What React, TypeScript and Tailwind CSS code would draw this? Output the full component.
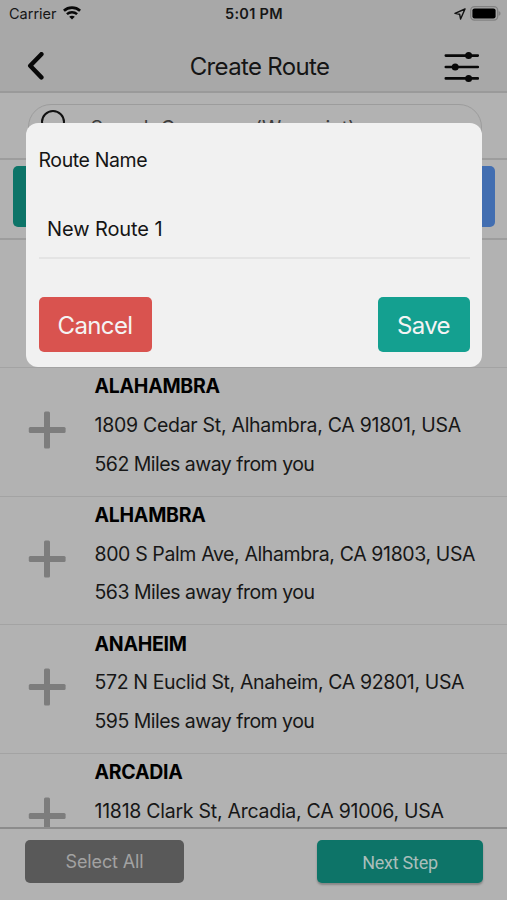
import React from "react";

type Stop = { name: string; address: string; addressTracking: string; distance?: string };

const stops: Stop[] = [
  { name: "ALAHAMBRA", address: "1809 Cedar St, Alhambra, CA 91801, USA", addressTracking: "tracking-[-0.28px]", distance: "562 Miles away from you" },
  { name: "ALHAMBRA", address: "800 S Palm Ave, Alhambra, CA 91803, USA", addressTracking: "tracking-[-0.38px]", distance: "563 Miles away from you" },
  { name: "ANAHEIM", address: "572 N Euclid St, Anaheim, CA 92801, USA", addressTracking: "tracking-[-0.37px]", distance: "595 Miles away from you" },
  { name: "ARCADIA", address: "11818 Clark St, Arcadia, CA 91006, USA", addressTracking: "tracking-[-0.26px]" },
];

function StatusBar() {
  return (
    <div className="flex h-7 items-center justify-between pl-[9px] pr-[6px] text-[#161616]">
      <div className="flex w-[120px] items-center gap-[6px]">
        <span className="text-[14.5px] leading-none">Carrier</span>
        <svg className="-mt-[2px]" width="18" height="14" viewBox="0 0 18 14" fill="none" stroke="#080808">
          <path d="M0.9 4.7C5.5 0.5 12.5 0.5 17.1 4.7" strokeWidth="2.7" />
          <path d="M3.9 8.2C6.8 5.5 11.2 5.5 14.1 8.2" strokeWidth="2.5" />
          <path d="M6.2 10.8C7.8 9.4 10.2 9.4 11.8 10.8L9 13.6Z" fill="#080808" stroke="none" />
        </svg>
      </div>
      <span className="-ml-[2px] text-[14.5px] font-semibold leading-none tracking-[0.3px]">5:01 PM</span>
      <div className="flex w-[120px] items-center justify-end gap-[4px]">
        <svg width="12" height="12" viewBox="0 0 12 12" fill="none" stroke="#111" strokeWidth="1.4" strokeLinejoin="round">
          <path d="M11 1L1 5.4L5.6 6.2L6.6 11Z" />
        </svg>
        <svg className="-mt-[1px]" width="31" height="15" viewBox="0 0 31 15">
          <rect x="0.7" y="0.7" width="27" height="13.4" rx="3.8" fill="none" stroke="#828282" strokeWidth="1.3" />
          <rect x="2.4" y="2.4" width="23.2" height="10" rx="2.2" fill="#000" />
          <path d="M28.6 5C31.2 5.8 31.2 9 28.6 9.8Z" fill="#828282" />
        </svg>
      </div>
    </div>
  );
}

function Header() {
  return (
    <header className="h-[93px] shrink-0 border-b-2 border-[#9a9a9a] bg-[#a8a8a8]">
      <StatusBar />
      <div className="flex h-[63px] items-center justify-between pl-[27px] pr-[27px] pt-[14px]">
        <svg className="-mt-[1px] mr-[18px]" width="18" height="28" viewBox="0 0 18 28" fill="none" stroke="#080808" strokeWidth="4.4" strokeLinecap="round" strokeLinejoin="round">
          <path d="M14.4 2.2L3.2 13.8L14.4 25.4" />
        </svg>
        <h1 className="ml-[12px] text-[24px] leading-none tracking-[-0.67px] text-[#151515]">Create Route</h1>
        <svg className="mt-[1px]" width="36" height="32" viewBox="0 0 36 32" fill="#080808" stroke="#080808" strokeWidth="2.6" strokeLinecap="round">
          <path d="M1.8 4.6H33.8M1.8 16H33.8M1.8 27.4H33.8" />
          <g stroke="none">
            <circle cx="24.6" cy="4.6" r="3.5" />
            <circle cx="11.2" cy="16" r="3.5" />
            <circle cx="24.6" cy="27.4" r="3.5" />
          </g>
        </svg>
      </div>
    </header>
  );
}

function SearchBar() {
  return (
    <div className="flex h-[67px] shrink-0 items-center border-b-2 border-[#9d9d9d] pl-[28px] pr-[25px]">
      <div className="mt-[3px] flex h-[46px] w-full items-center rounded-full border border-[#9c9c9c] pl-[11.5px]">
        <svg className="mt-[1px]" width="30" height="36" viewBox="0 0 30 36" fill="none" stroke="#111" strokeWidth="2">
          <circle cx="12" cy="12" r="11" />
          <path d="M20 20L28 29" />
        </svg>
        <span className="ml-[20px] mt-[4px] text-[19.5px] leading-none tracking-[0.02px] text-[#3c3c3c]">Search Company (Waypoint)</span>
      </div>
    </div>
  );
}

function StopRow({ stop }: { stop: Stop }) {
  return (
    <li className="flex h-[128.7px] shrink-0 border-t border-[#a3a3a3]">
      <div className="flex w-[94.5px] shrink-0 justify-center pt-[43px]">
        <svg className="-ml-[1px]" width="38" height="38" viewBox="0 0 38 38" fill="#7d7d7d">
          <rect x="0.8" y="16" width="36.8" height="6" rx="1.5" />
          <rect x="16" y="0.6" width="6" height="36.8" rx="1.5" />
        </svg>
      </div>
      <div className="-mt-[0.7px] whitespace-nowrap text-[19.5px] leading-[38.7px] text-[#171717]">
        <p><b className="font-bold tracking-[-0.27px] text-black">{stop.name}</b></p>
        <p><span className={stop.addressTracking}>{stop.address}</span></p>
        {stop.distance && <p><span className="tracking-[-0.52px]">{stop.distance}</span></p>}
      </div>
    </li>
  );
}

function RouteDialog() {
  return (
    <div role="dialog" className="absolute left-[26px] top-[123px] flex h-[244px] w-[456px] flex-col rounded-[12px] bg-[#f1f1f1] px-[12.5px] text-[#151515]">
      <label className="mt-[27px] text-[19.5px] leading-5 tracking-[-0.4px]">Route Name</label>
      <div className="mt-[40px] flex h-[49px] border-b-2 border-[#e4e4e4] pl-[8.5px] pt-[9px] text-[20px] leading-5 tracking-[-0.1px]">
        <span>New Route 1</span>
      </div>
      <div className="mt-[38px] flex justify-between text-[24px] tracking-[-0.65px] text-[#f4f4f4]">
        <button className="h-[55px] w-[113px] rounded-[5px] bg-[#d9534f] pt-[2px]">Cancel</button>
        <button className="h-[55px] w-[92px] rounded-[5px] bg-[#14a090] pt-[2px]">Save</button>
      </div>
    </div>
  );
}

export default function App() {
  return (
    <div className="relative flex h-[900px] w-[507px] flex-col overflow-hidden bg-[#b2b2b2] font-[Inter,'Liberation_Sans',sans-serif]">
      <Header />
      <SearchBar />
      <div className="flex h-[80px] shrink-0 items-start justify-between border-b-2 border-[#9d9d9d] pl-[13px] pr-[12px] pt-[6px]">
        <div className="h-[61px] w-[150px] rounded-[5px] bg-[#0d7468]" />
        <div className="h-[61px] w-[150px] rounded-[5px] bg-[#426eb1]" />
      </div>
      <ul className="flex h-[586.5px] shrink-0 flex-col overflow-hidden pt-[127px]">
        {stops.map((stop) => <StopRow key={stop.name} stop={stop} />)}
      </ul>
      <footer className="flex h-[73.5px] items-start justify-between border-t-2 border-[#8c8c8c] pl-[25px] pr-[24px] pt-[11.5px]">
        <button className="h-[43px] w-[159px] rounded-[5px] bg-[#595959] text-[18px] tracking-[-0.15px] text-[#a2a2a2]">Select All</button>
        <button className="h-[43px] w-[166px] rounded-[5px] bg-[#0d7468] pt-[1px] font-[Roboto,sans-serif] text-[18px] tracking-[-0.25px] text-[#a9bebb] shadow-[0_2px_2px_#00000040]">Next Step</button>
      </footer>
      <RouteDialog />
    </div>
  );
}
